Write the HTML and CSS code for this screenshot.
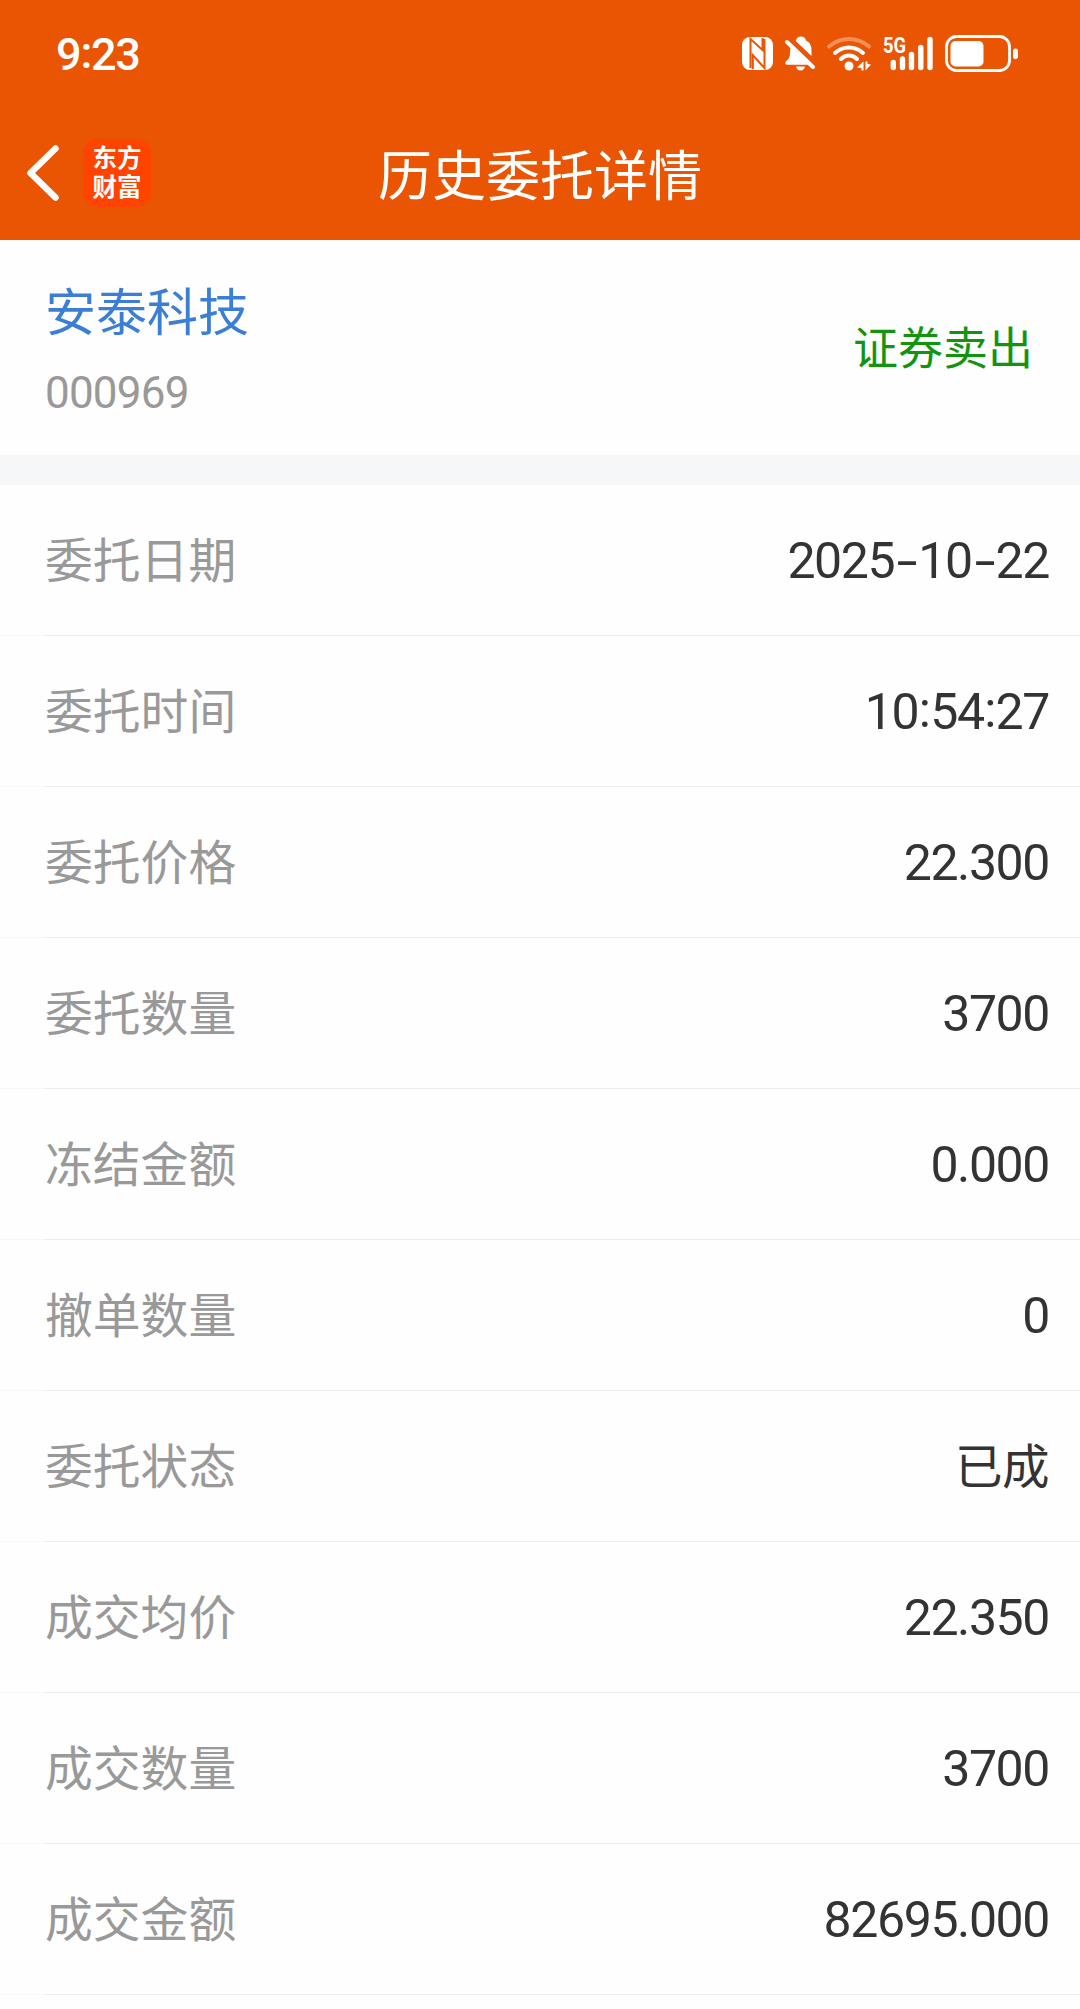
FILE: index.html
```html
<!DOCTYPE html>
<html lang="zh-CN">
<head>
    <meta charset="UTF-8">
    <meta name="viewport" content="width=device-width, initial-scale=1.0">
    <title>历史委托详情</title>
    <link rel="stylesheet" href="styles.css">
</head>
<body>
    <header>
        <div class="status-bar">
            <span class="time">9<span class="colon">:</span>23</span>
            <div class="status-icons">
                <!-- NFC -->
                <svg width="31" height="38" viewBox="0 0 31 38">
                    <rect x="0" y="2" width="31" height="33" rx="8" fill="#fff"/>
                    <path d="M8.500 33V4L20.500 15V3M22.500 4V33L10.800 20V34" fill="none" stroke="#ea5504" stroke-width="2"/>
                </svg>
                <!-- muted bell -->
                <svg width="30" height="38" viewBox="0 0 30 38">
                    <path d="M11 5.500Q12 1.500 16 1.500T21 5.500Q26.500 8 26.500 15V21L10.500 5.700Z" fill="#fff"/>
                    <path d="M5.500 12L24 29H1Q0 26.500 2 25.500Q5 23 5 18Z" fill="#fff"/>
                    <path d="M2 7L28 32" stroke="#fff" stroke-width="4" stroke-linecap="round"/>
                    <path d="M2 28H24" stroke="#fff" stroke-width="3.500" stroke-linecap="round"/>
                    <path d="M11 31.500H20Q19 35.500 15.500 35.500T11 31.500Z" fill="#fff"/>
                </svg>
                <!-- wifi -->
                <svg width="44" height="38" viewBox="0 0 44 38">
                    <g fill="none" stroke="#fff" stroke-width="4" stroke-linecap="round">
                        <path d="M2 11.500Q11 4 22 4T42 11.500" stroke-opacity=".35"/>
                        <path d="M8 18Q14 12.500 22 12.500T36 18"/>
                        <path d="M14 24Q17.500 20.500 22 20.500T30 24"/>
                    </g>
                    <circle cx="22" cy="31" r="4.500" fill="#fff"/>
                    <path d="M36.500 26.500V35.500H34.500V33L30 32.500ZM38.500 26.500H40.500V29L44 29.500L38.500 35.500Z" fill="#fff"/>
                </svg>
                <!-- 5G signal -->
                <svg width="50" height="38" viewBox="0 0 50 38">
                    <text class="net" x="0" y="18" textLength="23" lengthAdjust="spacingAndGlyphs">5G</text>
                    <path d="M10.300 27.500V32.500M19.500 24V32.500M28.500 19.500V32.500M37.800 12.500V32.500M47 4.500V32.500" stroke="#fff" stroke-width="5.400" stroke-linecap="round"/>
                </svg>
                <!-- battery -->
                <svg width="73" height="38" viewBox="0 0 73 38">
                    <rect x="1.500" y="1.500" width="63" height="34" rx="10" fill="none" stroke="#fff" stroke-width="2.800"/>
                    <rect x="5.500" y="6" width="33" height="25.500" rx="5" fill="#fff"/>
                    <rect x="68" y="13.500" width="5" height="10.500" rx="2.500" fill="#fff"/>
                </svg>
            </div>
        </div>
        <div class="nav-bar">
            <svg class="back" width="36" height="58" viewBox="0 0 36 58">
                <path d="M30.500 4.500L5.500 29L30.500 53.500" fill="none" stroke="#fff" stroke-width="6.500" stroke-linecap="round" stroke-linejoin="round"/>
            </svg>
            <div class="logo">东方<br>财富</div>
            <h1>历史委托详情</h1>
        </div>
    </header>
    <main>
        <section class="stock">
            <div>
                <div class="stock-name">安泰科技</div>
                <div class="stock-code">000969</div>
            </div>
            <div class="direction">证券卖出</div>
        </section>
        <ul class="details">
            <li><span class="label">委托日期</span><span class="value">2025<span class="dash">-</span>10<span class="dash">-</span>22</span></li>
            <li><span class="label">委托时间</span><span class="value">10<span class="colon">:</span>54<span class="colon">:</span>27</span></li>
            <li><span class="label">委托价格</span><span class="value">22.300</span></li>
            <li><span class="label">委托数量</span><span class="value">3700</span></li>
            <li><span class="label">冻结金额</span><span class="value">0.000</span></li>
            <li><span class="label">撤单数量</span><span class="value">0</span></li>
            <li><span class="label">委托状态</span><span class="value text">已成</span></li>
            <li><span class="label">成交均价</span><span class="value">22.350</span></li>
            <li><span class="label">成交数量</span><span class="value">3700</span></li>
            <li><span class="label">成交金额</span><span class="value">82695.000</span></li>
        </ul>
    </main>
</body>
</html>
```
FILE: styles.css
```css
* {
    box-sizing: border-box;
}
body {
    margin: 0;
    font-family: "Noto Sans CJK SC", sans-serif;
    background-color: #fefefe;
    color: #333333;
}
header {
    height: 240px;
    background-color: #ea5504;
    color: #ffffff;
}
.status-bar {
    display: flex;
    justify-content: space-between;
    align-items: center;
    height: 108px;
    padding: 0 62px 0 56px;
}
.time {
    font-family: Roboto, sans-serif;
    font-size: 45px;
    font-weight: 500;
    line-height: 54px;
    letter-spacing: -1.5px;
    padding-top: 1px;
}
.status-icons {
    display: flex;
    gap: 12px;
}
.status-icons svg {
    display: block;
    overflow: visible;
}
.net {
    font-family: Roboto, sans-serif;
    font-size: 22px;
    font-weight: 700;
    fill: #ffffff;
}
.nav-bar {
    display: grid;
    grid-template-columns: 36px 68px 1fr 151px;
    column-gap: 22px;
    align-items: center;
    height: 130px;
    padding-left: 25px;
}
.logo {
    width: 68px;
    height: 68px;
    padding-top: 3px;
    border-radius: 14px;
    background-color: #ff4400;
    font-size: 24.5px;
    font-weight: 700;
    line-height: 29px;
    text-align: center;
}
h1 {
    margin: 0;
    font-size: 54px;
    font-weight: 400;
    line-height: 80px;
    padding-bottom: 1px;
    text-align: center;
}
.stock {
    display: flex;
    justify-content: space-between;
    height: 215px;
    padding: 33px 47px 0 45px;
}
.stock-name {
    font-size: 51px;
    line-height: 72px;
    color: #3a7fd5;
}
.stock-code {
    margin-top: 18px;
    font-family: Roboto, sans-serif;
    font-size: 44px;
    letter-spacing: -0.8px;
    line-height: 60px;
    color: #999999;
}
.direction {
    margin-top: 38px;
    font-size: 45px;
    line-height: 70px;
    color: #11950f;
}
.details {
    margin: 0;
    padding: 0;
    list-style: none;
    border-top: 30px solid #f6f7f9;
}
.details li {
    display: flex;
    justify-content: space-between;
    align-items: center;
    height: 151px;
    padding: 0 31px 0 45px;
    background: linear-gradient(to right, #f7f7f7 45px, #ececec 45px) bottom / 100% 1px no-repeat;
}
.label {
    font-size: 47.8px;
    line-height: 70px;
    padding-bottom: 5px;
    color: #999999;
}
.value {
    font-family: Roboto, sans-serif;
    font-size: 50px;
    letter-spacing: -1.4px;
    line-height: 70px;
    padding-top: 1px;
}
.value.text {
    font-family: "Noto Sans CJK SC", sans-serif;
    font-size: 47.5px;
    letter-spacing: -0.5px;
    padding-bottom: 6px;
}
.colon {
    display: inline-block;
    width: 12px;
    line-height: 1;
    text-align: center;
    transform: translateY(-2px);
}
.time .colon {
    width: 11px;
}
.dash {
    display: inline-block;
    width: 24px;
    line-height: 1;
    text-align: center;
    transform: scaleX(1.5);
}
```
